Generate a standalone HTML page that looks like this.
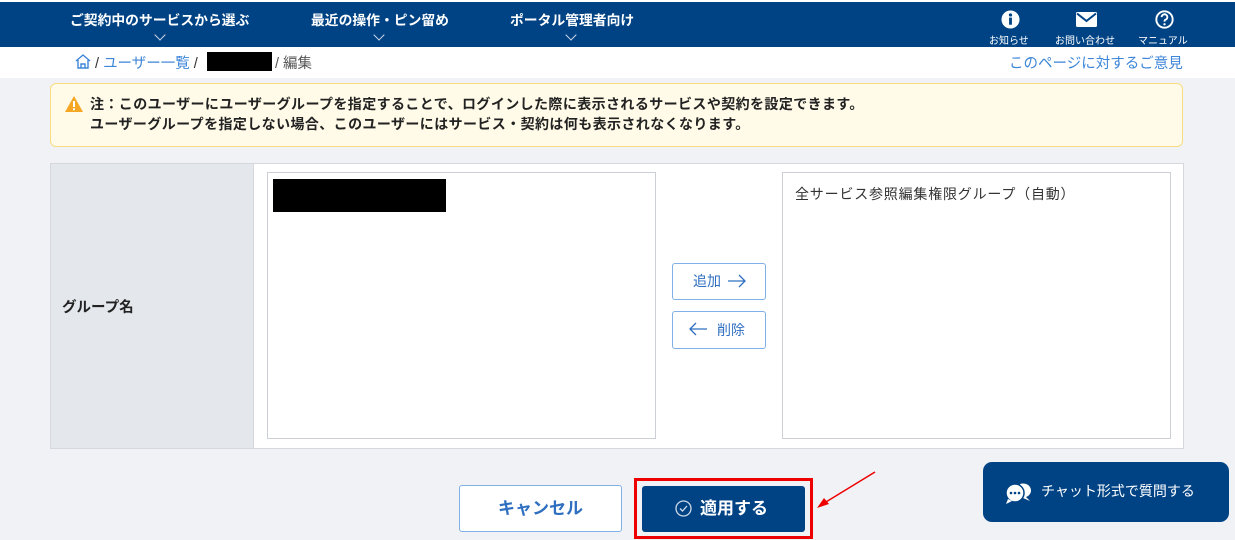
<!DOCTYPE html><html><head><meta charset="utf-8"><style>
*{margin:0;padding:0;box-sizing:border-box}
body{width:1235px;height:540px;overflow:hidden;background:#f1f2f6;font-family:"Liberation Sans","Noto Sans CJK JP",sans-serif;position:relative}
.a{position:absolute}
.nav{left:0;top:2px;width:1235px;height:45px;background:#004385;color:#fff}
.ni{font-size:13.8px;font-weight:bold;top:7px}
.chev{width:8px;height:8px;border-right:1px solid #cfd8e8;border-bottom:1px solid #cfd8e8;transform:rotate(45deg);top:29px}
.ic{font-size:10px;top:30px;text-align:center}
.bc{left:0;top:47px;width:1235px;height:31px;background:#fff;font-size:14.5px}
</style></head><body>
<div class="a" style="left:0;top:0;width:1235px;height:2px;background:#fff"></div>
<div class="a nav">
<div class="a ni" style="left:70px">ご契約中のサービスから選ぶ</div>
<div class="a chev" style="left:156px"></div>
<div class="a ni" style="left:311px">最近の操作・ピン留め</div>
<div class="a chev" style="left:375px"></div>
<div class="a ni" style="left:510px">ポータル管理者向け</div>
<div class="a chev" style="left:567px"></div>
<svg class="a" style="left:1001px;top:8px" width="19" height="19" viewBox="0 0 20 20"><circle cx="10" cy="10" r="9.5" fill="#fff"/><rect x="8.5" y="8" width="3" height="7.5" fill="#004385"/><circle cx="10" cy="5.2" r="1.7" fill="#004385"/></svg>
<svg class="a" style="left:1076px;top:10px" width="21" height="15" viewBox="0 0 21 15"><rect width="21" height="15" rx="1.5" fill="#fff"/><path d="M1 1.5 L10.5 9 L20 1.5" stroke="#004385" stroke-width="2" fill="none"/></svg>
<svg class="a" style="left:1155px;top:8px" width="19" height="19" viewBox="0 0 20 20"><circle cx="10" cy="10" r="8.6" stroke="#fff" stroke-width="2" fill="none"/><path d="M7 7.5a3 3 0 1 1 4 2.8c-.8.4-1 1-1 2" stroke="#fff" stroke-width="2" fill="none"/><circle cx="10" cy="15" r="1.2" fill="#fff"/></svg>
<div class="a ic" style="left:989px">お知らせ</div>
<div class="a ic" style="left:1055px">お問い合わせ</div>
<div class="a ic" style="left:1138px">マニュアル</div>
</div>
<div class="a bc">
<svg class="a" style="left:75px;top:7px" width="16" height="15" viewBox="0 0 16 15"><path d="M1 7 L8 1 L15 7 M3 6 V14 H13 V6" stroke="#3d86d8" stroke-width="1.4" fill="none"/><path d="M6 14 V10 H10 V14" stroke="#3d86d8" stroke-width="1.4" fill="none"/></svg>
<div class="a" style="left:95px;top:5px;color:#333">/ <span style="color:#3d86d8">ユーザー一覧</span> /</div>
<div class="a" style="left:207px;top:5px;width:65px;height:19px;background:#000"></div>
<div class="a" style="left:275px;top:5px;color:#555">/ 編集</div>
<div class="a" style="left:1009px;top:5px;color:#3d86d8">このページに対するご意見</div>
</div>
<div class="a" style="left:50px;top:83px;width:1133px;height:64px;background:#fffbe8;border:1px solid #f7dc82;border-radius:6px;font-size:14px;letter-spacing:0.4px;font-weight:bold;color:#222;line-height:20px;padding:10px 0 0 39px">
<svg class="a" style="left:14px;top:12px" width="18" height="16" viewBox="0 0 18 16"><path d="M9 0 L18 16 H0 Z" fill="#f5a623"/><rect x="8" y="5" width="2" height="6" fill="#fff"/><rect x="8" y="12.3" width="2" height="2" fill="#fff"/></svg>
注：このユーザーにユーザーグループを指定することで、ログインした際に表示されるサービスや契約を設定できます。<br>ユーザーグループを指定しない場合、このユーザーにはサービス・契約は何も表示されなくなります。</div>
<div class="a" style="left:50px;top:163px;width:1134px;height:286px;background:#fff;border:1px solid #d5d8de"></div>
<div class="a" style="left:51px;top:164px;width:203px;height:284px;background:#e4e7eb;border-right:1px solid #d5d8de"></div>
<div class="a" style="left:62px;top:296px;font-size:14.5px;font-weight:bold;color:#222">グループ名</div>
<div class="a" style="left:267px;top:172px;width:389px;height:267px;background:#fff;border:1px solid #ccd0d6"></div>
<div class="a" style="left:273px;top:179px;width:173px;height:33px;background:#000"></div>
<div class="a" style="left:782px;top:172px;width:389px;height:267px;background:#fff;border:1px solid #ccd0d6"></div>
<div class="a" style="left:795px;top:184px;font-size:14px;letter-spacing:0.8px;color:#333">全サービス参照編集権限グループ（自動）</div>
<div class="a" style="left:672px;top:263px;width:94px;height:37px;border:1px solid #7fb0e6;border-radius:3px;background:#fff;color:#2f6fc0;font-size:14px;line-height:35px;padding-left:20px">追加</div>
<svg class="a" style="left:727px;top:274px" width="20" height="14" viewBox="0 0 20 14"><path d="M1 7 H18 M12 1 L18 7 L12 13" stroke="#2f6fc0" stroke-width="1.3" fill="none"/></svg>
<div class="a" style="left:672px;top:311px;width:94px;height:38px;border:1px solid #7fb0e6;border-radius:3px;background:#fff;color:#2f6fc0;font-size:14px;line-height:36px;padding-left:44px">削除</div>
<svg class="a" style="left:688px;top:322px" width="20" height="14" viewBox="0 0 20 14"><path d="M19 7 H2 M8 1 L2 7 L8 13" stroke="#2f6fc0" stroke-width="1.3" fill="none"/></svg>
<div class="a" style="left:459px;top:485px;width:163px;height:47px;border:1px solid #7fb0e6;border-radius:3px;background:#fff;color:#2f6fc0;font-size:17px;font-weight:bold;text-align:center;line-height:45px">キャンセル</div>
<div class="a" style="left:634px;top:478px;width:179px;height:61px;border:3px solid #ee0000"></div>
<div class="a" style="left:642px;top:486px;width:163px;height:46px;background:#004385;border-radius:3px;color:#fff;font-size:17px;font-weight:bold;line-height:46px;padding-left:58px">適用する</div>
<svg class="a" style="left:675px;top:500px" width="17" height="17" viewBox="0 0 17 17"><circle cx="8.5" cy="8.5" r="7.5" stroke="#cfdaea" stroke-width="1.3" fill="none"/><path d="M5 8.5 L7.5 11 L12 6" stroke="#cfdaea" stroke-width="1.3" fill="none"/></svg>
<svg class="a" style="left:815px;top:470px" width="62" height="40" viewBox="0 0 62 40"><path d="M60 2 L6 35" stroke="#e00" stroke-width="1.5"/><path d="M2 38 L14 34 L9 28 Z" fill="#e00"/></svg>
<div class="a" style="left:983px;top:462px;width:246px;height:60px;background:#004385;border-radius:9px;color:#fff;font-size:14px;line-height:58px;padding-left:58px">チャット形式で質問する</div>
<svg class="a" style="left:1004px;top:481px" width="32" height="24" viewBox="0 0 32 24"><path d="M16 3 a8 7 0 1 1 6 13 l4 4 -7 -3 z" fill="#fff"/><circle cx="11" cy="12" r="9" fill="#fff" stroke="#004385" stroke-width="1.5"/><path d="M4 18 l-2 5 6 -3z" fill="#fff"/><circle cx="7" cy="12" r="1.3" fill="#004385"/><circle cx="11" cy="12" r="1.3" fill="#004385"/><circle cx="15" cy="12" r="1.3" fill="#004385"/></svg>
</body></html>
